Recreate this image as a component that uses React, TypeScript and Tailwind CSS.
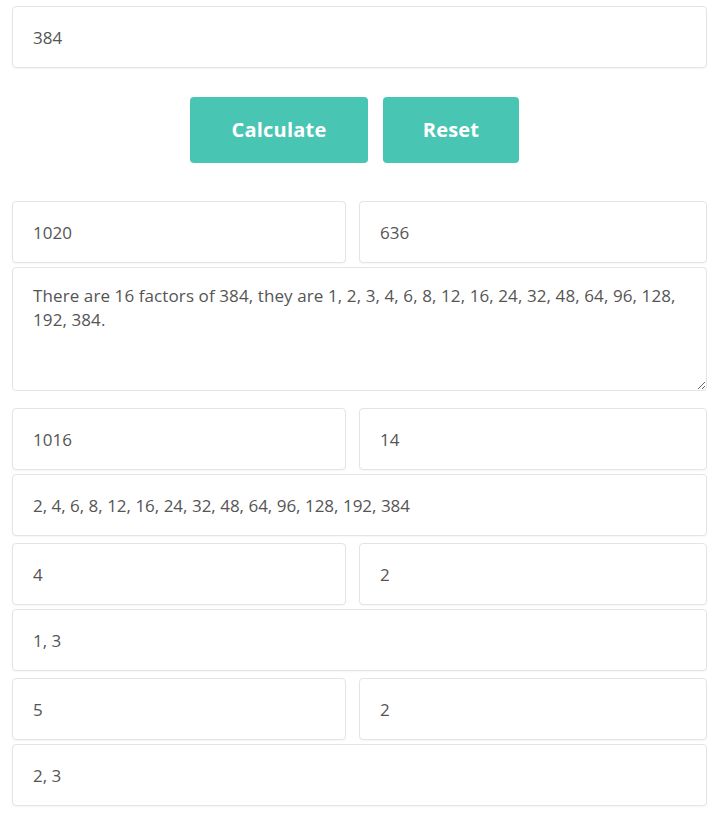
const box =
  'block h-[62px] w-full rounded border border-[#e4e4e4] bg-white px-5 text-[17px] text-[#555] shadow-[0_1px_2px_rgba(0,0,0,0.04)] outline-none'

const Field = ({ value }: { value: string }) => (
  <input readOnly className={box} value={value} />
)

const Pair = ({ left, right }: { left: string; right: string }) => (
  <div className="grid grid-cols-[334px_1fr] gap-[13px]">
    <Field value={left} />
    <Field value={right} />
  </div>
)

export default function App() {
  return (
    <div
      className="min-h-[816px] bg-white pl-3 pr-[9px] pt-[6px]"
      style={{ fontFamily: '"Open Sans", sans-serif' }}
    >
      <Field value="384" />

      <div className="mt-[29px] mb-[38px] flex justify-center gap-[15px] pr-[10px]">
        <button className="h-[66px] w-[178px] rounded bg-[#49c5b4] text-[20px] font-bold tracking-[0.2px] text-white">
          Calculate
        </button>
        <button className="h-[66px] w-[136px] rounded bg-[#49c5b4] text-[20px] font-bold tracking-[0.2px] text-white">
          Reset
        </button>
      </div>

      <Pair left="1020" right="636" />
      <textarea
        readOnly
        className="mt-[4px] block h-[124px] w-full rounded border border-[#e4e4e4] bg-white px-5 pt-[16px] text-[17px] leading-6 tracking-[0.1px] text-[#555] outline-none"
        value="There are 16 factors of 384, they are 1, 2, 3, 4, 6, 8, 12, 16, 24, 32, 48, 64, 96, 128, 192, 384."
      />

      <div className="mt-[17px] flex flex-col">
        <Pair left="1016" right="14" />
        <div className="mt-[4px]">
          <Field value="2, 4, 6, 8, 12, 16, 24, 32, 48, 64, 96, 128, 192, 384" />
        </div>
        <div className="mt-[7px]">
          <Pair left="4" right="2" />
        </div>
        <div className="mt-[4px]">
          <Field value="1, 3" />
        </div>
        <div className="mt-[7px]">
          <Pair left="5" right="2" />
        </div>
        <div className="mt-[4px]">
          <Field value="2, 3" />
        </div>
      </div>
    </div>
  )
}
